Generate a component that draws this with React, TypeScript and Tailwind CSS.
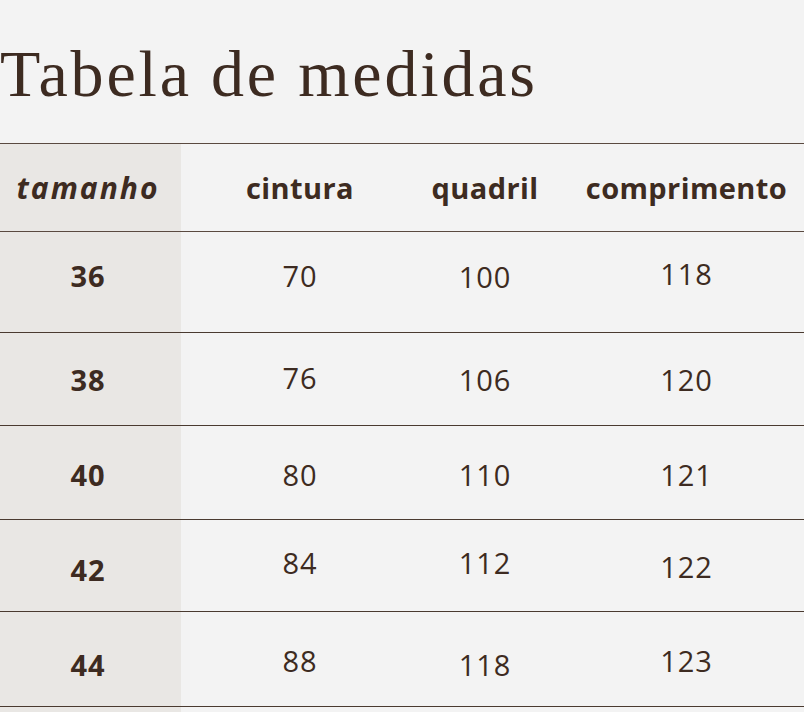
const rows = [
  { size: "36", sm: "-mt-[12px]", h: "h-[101px]", cells: [["70", "-mt-[12px]"], ["100", "-mt-[10px]"], ["118", "-mt-[16px]"]] },
  { size: "38", sm: "mt-[2px]", h: "h-[93px]", cells: [["76", "-mt-[2px]"], ["106", "mt-[2px]"], ["120", "mt-[2px]"]] },
  { size: "40", sm: "mt-[4px]", h: "h-[94px]", cells: [["80", "mt-[4px]"], ["110", "mt-[4px]"], ["121", "mt-[4px]"]] },
  { size: "42", sm: "mt-[8px]", h: "h-[92px]", cells: [["84", "-mt-[6px]"], ["112", "-mt-[6px]"], ["122", "mt-[2px]"]] },
  { size: "44", sm: "mt-[12px]", h: "h-[95px]", cells: [["88", "mt-[4px]"], ["118", "mt-[12px]"], ["123", "mt-[4px]"]] },
];

const grid = "grid grid-cols-[181px_238px_132px_253px]";

export default function App() {
  return (
    <div className="w-[804px] h-[712px] overflow-hidden bg-[#f3f3f3] text-[#3d2b21] font-['Open_Sans',sans-serif]">
      <div className="h-[143px] pt-[34px]">
        <h1 className="font-['Liberation_Serif',serif] text-[66px] leading-[80px] tracking-[2.8px]">
          Tabela de medidas
        </h1>
      </div>

      <div className="relative">
        <div className="absolute left-0 top-0 w-[181px] h-[600px] bg-[#e9e7e4]" />

        <div className={`${grid} relative h-[89px] border-y border-[#5a4a40] items-center text-[29px] font-bold tracking-[0.4px]`}>
          <div className="text-center pr-[5px] italic font-bold text-[30px] tracking-[2px]">tamanho</div>
          <div className="text-center">cintura</div>
          <div className="text-center">quadril</div>
          <div className="text-center pl-[18px]">comprimento</div>
        </div>

        {rows.map((r) => (
          <div key={r.size} className={`${grid} relative ${r.h} border-b border-[#4a3a30] items-center text-[29px] tracking-[1px]`}>
            <div className={`text-center pr-[5px] font-bold ${r.sm}`}>{r.size}</div>
            {r.cells.map(([v, cls], i) => (
              <div key={i} className={`text-center ${i === 2 ? "pl-[18px]" : ""} ${cls}`}>
                {v}
              </div>
            ))}
          </div>
        ))}
      </div>
    </div>
  );
}
